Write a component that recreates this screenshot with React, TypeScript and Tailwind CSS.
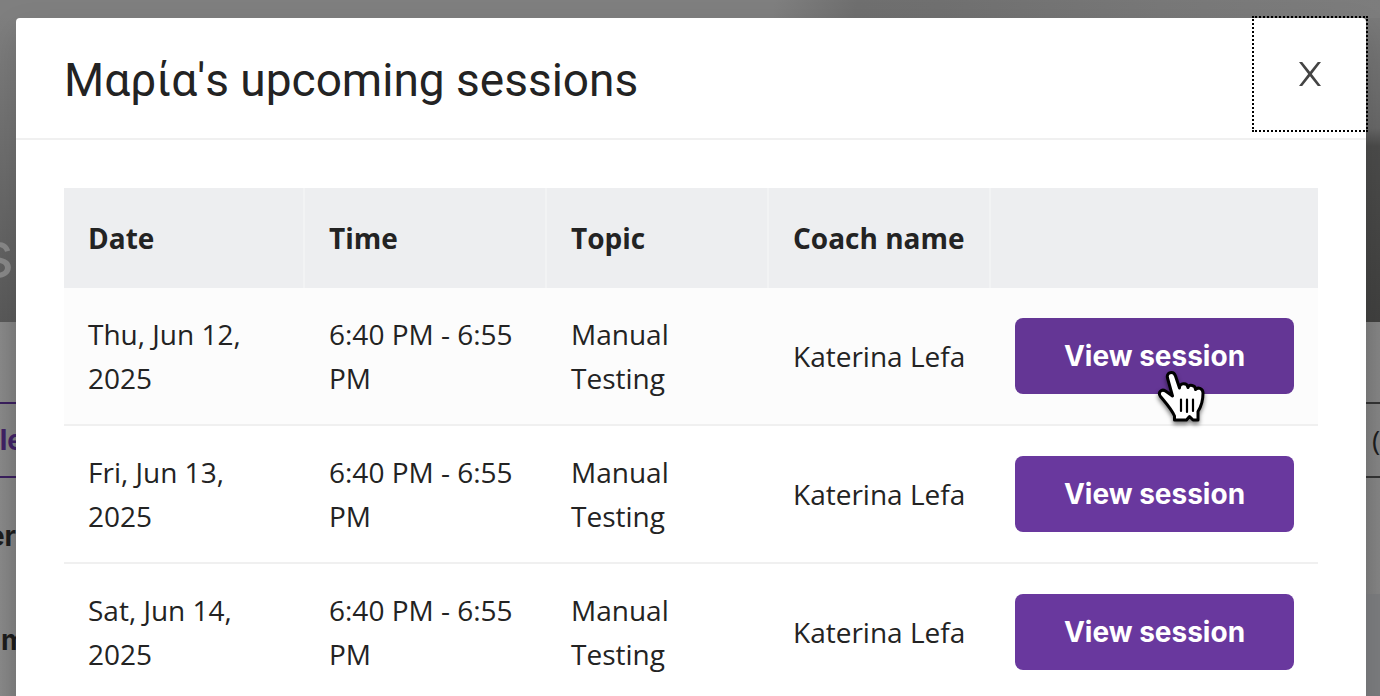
const sessions = [
  { date: "Thu, Jun 12, 2025", hovered: true },
  { date: "Fri, Jun 13, 2025", hovered: false },
  { date: "Sat, Jun 14, 2025", hovered: false },
];

const headCell = "border-r-2 border-[#f2f3f4] px-6 py-7 text-left font-bold";
const cell = "border-b-2 border-[#f0f0f0] px-6 py-6";

function PointerHand() {
  return (
    <svg
      className="pointer-events-none absolute top-[50px] left-[142px] h-[58px] w-[50px] drop-shadow-[0_3px_2px_rgba(0,0,0,0.5)]"
      viewBox="0 0 50 58"
      aria-hidden="true"
    >
      <path
        d="M17.500 52 V48 C14.500 41 8 34 3.500 28.500 C0.500 24.500 4.500 20.500 8.500 23 L15.500 28 L10.500 10 C9 4 16.500 2.500 18.500 8 L22.500 20 C22 15 30 14 31 19.500 C32 16 38.500 17 38.500 21.500 C40.500 19 46 20 46 25 C46 33 44.500 38 41 43.500 V52 H36 L32.500 48.500 L29.500 52 Z"
        fill="white"
        stroke="black"
        strokeWidth="3"
        strokeLinejoin="round"
      />
      <path d="M24 31.500 V43 M30 31.500 V44 M36 31.500 V43" stroke="black" strokeWidth="2.200" strokeLinecap="round" />
    </svg>
  );
}

function Backdrop() {
  return (
    <div className="flex h-full flex-col" aria-hidden="true">
      <div className="relative flex h-[322px] shrink-0 justify-between bg-linear-to-b from-[#818181] to-[#595959]">
        <div className="absolute inset-x-0 top-0 h-[18px] bg-[linear-gradient(100deg,#7f7f7f_0%,#7f7f7f_56%,#6f6f6f_62%,#707070_68%,#787878_84%,#7d7d7d_100%)]" />
        <div className="flex w-4 justify-end overflow-hidden pt-[214px] pr-0.5">
          <span className="font-['Inter'] text-[64px] leading-[80px] text-[#888888]">s</span>
        </div>
        <div className="w-4 bg-[linear-gradient(to_bottom,#7c7c7c_0px,#676767_128px,#4b4b4a_146px,#40403f_322px)]" />
      </div>
      <div className="flex grow justify-between bg-[#858585]">
        <div className="w-4 overflow-hidden bg-linear-to-r from-[#898989] to-[#808080] pt-20 font-['Inter'] text-[28px] leading-[44px] font-bold text-[#1c1c1c]">
          <div className="flex h-[76px] items-center justify-end border-y-2 border-[#3a1f5d] text-[#3f2164]">
            <span className="-mr-2">ele</span>
          </div>
          <div className="mt-9 flex justify-end">er</div>
          <div className="mt-[60px] flex pl-px">m</div>
        </div>
        <div className="flex w-4 flex-col bg-linear-to-r from-[#7c7c7c] to-[#858585] pt-20">
          <div className="flex h-[76px] items-center overflow-hidden border-y-2 border-[#333333] pl-2 font-['Open_Sans'] text-[28px] text-[#1c1c1c]">
            (
          </div>
          <div className="mt-[116px] grow bg-[#7b7c7e]" />
        </div>
      </div>
    </div>
  );
}

export default function App() {
  return (
    <div className="relative h-screen overflow-hidden bg-[#858585]">
      <Backdrop />
      <div
        role="dialog"
        aria-modal="true"
        aria-labelledby="sessions-title"
        className="absolute top-[18px] right-[14px] left-4 rounded-[4px] bg-white font-['Open_Sans','Noto_Sans',sans-serif] text-[28px] leading-[44px] text-[#232323] shadow-[0_12px_32px_rgba(0,0,0,0.12)]"
      >
        <header className="flex h-[122px] items-start justify-between border-b-2 border-[#f0f0f0] pl-12">
          <h1 id="sessions-title" className="pt-8 font-['Roboto',sans-serif] text-[46px] leading-[60px]">
            Μαρία's upcoming sessions
          </h1>
          <button
            type="button"
            aria-label="Close"
            className="flex size-28 items-center justify-center text-[#444444] outline-2 outline-black outline-dotted"
          >
            <svg className="h-6 w-[22px]" viewBox="0 0 22 24" fill="currentColor" aria-hidden="true">
              <path d="M0 0 H3.200 L11 9.700 L18.800 0 H22 L12.800 12 L22 24 H18.800 L11 14.300 L3.200 24 H0 L9.200 12 Z" />
            </svg>
          </button>
        </header>
        <div className="p-12">
          <table className="w-full table-fixed border-separate border-spacing-0">
            <colgroup>
              <col className="w-[241px]" />
              <col className="w-[242px]" />
              <col className="w-[222px]" />
              <col className="w-[222px]" />
              <col />
            </colgroup>
            <thead className="bg-[#edeef0]">
              <tr>
                <th scope="col" className={headCell}>Date</th>
                <th scope="col" className={headCell}>Time</th>
                <th scope="col" className={headCell}>Topic</th>
                <th scope="col" className="border-r-2 border-[#f2f3f4] py-7 pl-6 text-left font-bold whitespace-nowrap">Coach name</th>
                <td />
              </tr>
            </thead>
            <tbody>
              {sessions.map((session) => (
                <tr key={session.date} className={session.hovered ? "bg-[#fcfcfc]" : "bg-white"}>
                  <td className={cell}>{session.date}</td>
                  <td className={cell}>6:40 PM - 6:55 PM</td>
                  <td className={cell}>Manual Testing</td>
                  <td className={`${cell} whitespace-nowrap`}>Katerina Lefa</td>
                  <td className={cell}>
                    <div className="relative">
                      <button
                        type="button"
                        className={`block h-[76px] w-full rounded-lg font-['Inter',sans-serif] text-[28px] font-bold whitespace-nowrap text-white ${session.hovered ? "bg-[#643695]" : "bg-[#69389e]"}`}
                      >
                        View session
                      </button>
                      {session.hovered && <PointerHand />}
                    </div>
                  </td>
                </tr>
              ))}
            </tbody>
          </table>
        </div>
      </div>
    </div>
  );
}
